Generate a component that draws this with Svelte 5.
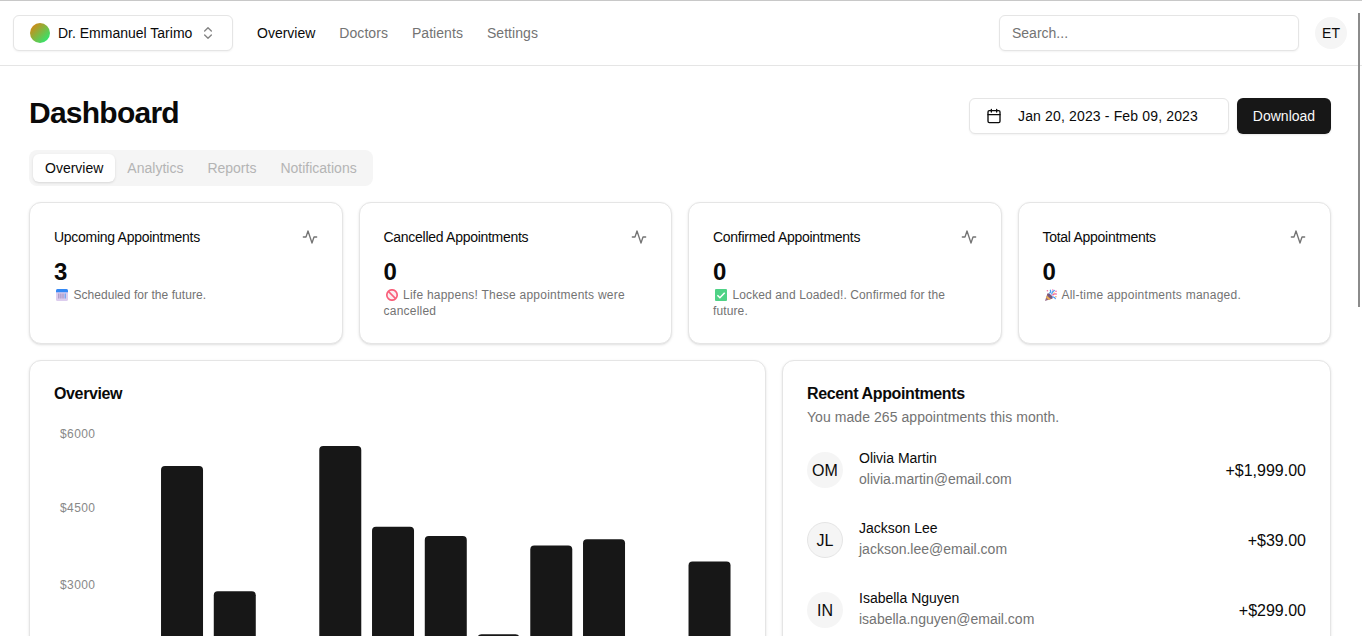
<script>
  const nav = ['Overview', 'Doctors', 'Patients', 'Settings'];
  const tabs = ['Overview', 'Analytics', 'Reports', 'Notifications'];
  const stats = [
    { title: 'Upcoming Appointments', value: 3, icon: 'calendar', note: 'Scheduled for the future.', tracking: 0.05 },
    { title: 'Cancelled Appointments', value: 0, icon: 'banned', note: 'Life happens! These appointments were cancelled', tracking: 0.23 },
    { title: 'Confirmed Appointments', value: 0, icon: 'check', note: 'Locked and Loaded!. Confirmed for the future.', tracking: 0.12 },
    { title: 'Total Appointments', value: 0, icon: 'party', note: 'All-time appointments managed.', tracking: 0.25 }
  ];
  const people = [
    { initials: 'OM', name: 'Olivia Martin', email: 'olivia.martin@email.com', amount: '+$1,999.00' },
    { initials: 'JL', name: 'Jackson Lee', email: 'jackson.lee@email.com', amount: '+$39.00', ring: true },
    { initials: 'IN', name: 'Isabella Nguyen', email: 'isabella.nguyen@email.com', amount: '+$299.00' }
  ];
  // Chart geometry: 12 bands of 52.75px starting at x=65, baseline at y=315
  const ticks = [
    { label: '$6000', y: 13 },
    { label: '$4500', y: 87 },
    { label: '$3000', y: 164 }
  ];
  const bars = [
    { month: 1, top: 41 },
    { month: 2, top: 166.3 },
    { month: 4, top: 21 },
    { month: 5, top: 101.7 },
    { month: 6, top: 111 },
    { month: 7, top: 209.2 },
    { month: 8, top: 120.4 },
    { month: 9, top: 114.2 },
    { month: 11, top: 136.5 }
  ];
  function barPath({ month, top }) {
    const x = 65 + month * 52.75 + 5.275;
    return `M${x} 315V${top + 4}a4 4 0 0 1 4-4h34a4 4 0 0 1 4 4V315Z`;
  }
</script>

<div class="page">
  <header>
    <button class="box switcher">
      <span class="dot"></span>
      <span class="who">Dr. Emmanuel Tarimo</span>
      <svg class="line-icon faded" viewBox="0 0 24 24"><path d="m7 15 5 5 5-5M7 9l5-5 5 5" /></svg>
    </button>
    <nav>
      {#each nav as item, i}
        <a class:current={i === 0}>{item}</a>
      {/each}
    </nav>
    <input class="box search" placeholder="Search..." />
    <span class="me">ET</span>
  </header>

  <main>
    <div class="heading">
      <h2>Dashboard</h2>
      <div class="actions">
        <button class="box dates">
          <svg class="line-icon" viewBox="0 0 24 24"><path d="M8 2v4M16 2v4M3 10h18" /><rect x="3" y="4" width="18" height="18" rx="2" /></svg>
          Jan 20, 2023 - Feb 09, 2023
        </button>
        <button class="download">Download</button>
      </div>
    </div>

    <div class="tabs">
      {#each tabs as tab, i}
        <button class="tab" class:active={i === 0}>{tab}</button>
      {/each}
    </div>

    <section class="stats">
      {#each stats as stat}
        <article class="card stat">
          <div class="stat-head">
            <h3>{stat.title}</h3>
            <svg class="line-icon muted" viewBox="0 0 24 24"><path d="M22 12h-4l-3 9L9 3l-3 9H2" /></svg>
          </div>
          <div class="value">{stat.value}</div>
          <p style="letter-spacing: {stat.tracking}px">
            <svg class="emoji" viewBox="0 0 16 12">
              {#if stat.icon === 'calendar'}
                <rect x="2" width="12" height="12" rx="1.6" fill="#dccdee" />
                <path d="M2 3.2V1.5Q2 0 3.5 0h9Q14 0 14 1.5v1.7Z" fill="#3489f5" />
                <path d="M4.8 4.4v5.2M6.9 4.4v5.2M9 4.4v5.2" stroke="#a18fc0" stroke-width="1.1" />
                <path d="M11.2 4.4v5.2" stroke="#5e9df0" stroke-width="1.1" />
              {:else if stat.icon === 'banned'}
                <circle cx="8" cy="6" r="5.2" fill="#fbeef1" stroke="#f9607b" stroke-width="1.7" />
                <path d="m4.4 2.4 7.2 7.2" stroke="#f9607b" stroke-width="1.6" />
              {:else if stat.icon === 'check'}
                <rect x="2" width="12" height="12" rx="1" fill="#4fd286" />
                <path d="m4.4 6.2 2.5 2.5 4.8-5" fill="none" stroke="#fff" stroke-width="1.5" />
              {:else}
                <path d="M2 12 4.4 4.5 9.4 9.4Z" fill="#9a6c86" />
                <path d="m3.7 6.8 4.1 3.4-1.7.7-3-2.5Z" fill="#eeb04f" />
                <ellipse cx="7" cy="7" rx="1.5" ry="3.4" transform="rotate(-45 7 7)" fill="#75577c" />
                <path d="M6.4 4.4Q8.5 3 7.2.8M8.6 5.5q.3-3 3.2-4.2" fill="none" stroke="#4c9cf0" stroke-width="1.2" />
                <path d="M9.5 6.4q1-2 4.3-1.2" fill="none" stroke="#f05b9a" stroke-width="1.3" />
                <path d="M9.2 8q2.5-.4 3.4 2.1" fill="none" stroke="#4b9af0" stroke-width="1.3" />
                <circle cx="4.4" cy="1.8" r=".8" fill="#f06f9e" />
                <circle cx="9.8" cy="1" r=".7" fill="#ec6bb2" />
                <circle cx="13" cy="2.3" r=".8" fill="#ef669b" />
                <circle cx="11" cy="4" r=".7" fill="#f3b44e" />
                <circle cx="12.9" cy="7.8" r=".7" fill="#ee9957" />
              {/if}
            </svg>
            {stat.note}
          </p>
        </article>
      {/each}
    </section>

    <section class="panels">
      <article class="card overview">
        <h3>Overview</h3>
        <svg class="chart" width="703" height="350" viewBox="0 0 703 350">
          {#each ticks as tick}
            <text x="57.4" y={tick.y} text-anchor="end">{tick.label}</text>
          {/each}
          {#each bars as bar}
            <path d={barPath(bar)} />
          {/each}
        </svg>
      </article>

      <article class="card recent">
        <h3>Recent Appointments</h3>
        <p class="sub">You made 265 appointments this month.</p>
        <div class="list">
          {#each people as person}
            <div class="person">
              <span class="avatar" class:ring={person.ring}>{person.initials}</span>
              <div class="info">
                <span class="name">{person.name}</span>
                <span class="email">{person.email}</span>
              </div>
              <span class="amount">{person.amount}</span>
            </div>
          {/each}
        </div>
      </article>
    </section>
  </main>
  <div class="scroll-thumb"></div>
</div>

<style>
  :global(body) {
    overflow: hidden;
    background: #fff;
  }
  .page, .page * {
    box-sizing: border-box;
  }
  .page {
    position: relative;
    height: 636px;
    overflow: hidden;
    border-top: 1px solid #c8c8c8;
    background: #fff;
    color: #0a0a0a;
    font: 14px/20px "Liberation Sans", Arial, sans-serif;
  }
  h2, h3, p {
    margin: 0;
  }
  button, input {
    font: inherit;
    color: inherit;
    border: 0;
    background: none;
    margin: 0;
  }
  header {
    display: flex;
    align-items: center;
    height: 65px;
    padding: 0 15px 0 13px;
    border-bottom: 1px solid #e5e5e5;
  }
  .box {
    height: 36px;
    border: 1px solid #e5e5e5;
    border-radius: 6px;
    background: #fff;
    box-shadow: 0 1px 2px rgb(0 0 0 / 0.05);
  }
  .line-icon {
    flex: none;
    width: 16px;
    height: 16px;
    fill: none;
    stroke: currentColor;
    stroke-width: 2;
    stroke-linecap: round;
    stroke-linejoin: round;
  }
  .faded {
    opacity: 0.5;
    margin-left: auto;
  }
  .muted {
    color: #737373;
  }
  .switcher {
    display: flex;
    align-items: center;
    width: 220px;
    padding: 0 16px;
  }
  .dot {
    width: 20px;
    height: 20px;
    margin-right: 8px;
    border-radius: 50%;
    background: linear-gradient(135deg, #ea7b08 0%, #16f57c 100%);
  }
  nav {
    display: flex;
    gap: 24px;
    margin: 0 auto 0 24px;
    color: #737373;
    letter-spacing: 0.05px;
  }
  .current {
    color: #0a0a0a;
    letter-spacing: 0;
  }
  .search {
    width: 300px;
    padding: 4px 12px;
    margin-right: 16px;
  }
  .search::placeholder {
    color: #737373;
    opacity: 1;
  }
  .me {
    display: grid;
    place-items: center;
    width: 32px;
    height: 32px;
    border-radius: 50%;
    background: #f5f5f5;
  }
  main {
    padding: 32px 31px 0 29px;
  }
  .heading {
    display: flex;
    justify-content: space-between;
    height: 36px;
    margin-bottom: 16px;
  }
  h2 {
    font-size: 30px;
    line-height: 30px;
    font-weight: 700;
    letter-spacing: -0.025em;
  }
  .actions {
    display: flex;
    gap: 8px;
  }
  .dates {
    display: flex;
    align-items: center;
    gap: 16px;
    width: 260px;
    padding: 0 16px;
    letter-spacing: 0.15px;
    white-space: nowrap;
  }
  .download {
    width: 94px;
    height: 36px;
    padding: 0;
    border-radius: 6px;
    background: #171717;
    color: #fafafa;
    box-shadow: 0 1px 2px rgb(0 0 0 / 0.1);
  }
  .tabs {
    display: inline-flex;
    height: 36px;
    padding: 4px;
    border-radius: 8px;
    background: #f5f5f5;
    vertical-align: top;
  }
  .tab {
    padding: 4px 12px;
    border-radius: 6px;
    color: #b4b4b4;
  }
  .active {
    background: #fff;
    color: #0a0a0a;
    box-shadow: 0 1px 3px rgb(0 0 0 / 0.1), 0 1px 2px -1px rgb(0 0 0 / 0.1);
  }
  .card {
    border: 1px solid #e5e5e5;
    border-radius: 12px;
    background: #fff;
    box-shadow: 0 1px 3px rgb(0 0 0 / 0.1), 0 1px 2px -1px rgb(0 0 0 / 0.1);
  }
  .stats {
    display: grid;
    grid-template-columns: repeat(4, 1fr);
    gap: 16px;
    margin: 16px 0;
  }
  .stat {
    height: 142px;
    padding: 24px;
  }
  .stat-head {
    display: flex;
    align-items: center;
    justify-content: space-between;
    margin-bottom: 8px;
  }
  .stat h3 {
    font-size: 14px;
    font-weight: 400;
    letter-spacing: -0.28px;
  }
  .value {
    height: 32px;
    font-size: 24px;
    line-height: 34px;
    font-weight: 700;
  }
  .stat p {
    font-size: 12px;
    line-height: 16px;
    color: #737373;
  }
  .emoji {
    width: 16px;
    height: 12px;
    vertical-align: -2px;
  }
  .panels {
    display: grid;
    grid-template-columns: 737px 1fr;
    gap: 16px;
  }
  .panels .card {
    height: 427px;
    padding: 24px;
  }
  .panels h3 {
    height: 16px;
    font-size: 16px;
    line-height: 18px;
    font-weight: 700;
    letter-spacing: -0.37px;
  }
  .chart {
    display: block;
    margin: 24px 0 0 -16px;
    fill: #171717;
  }
  .chart text {
    font-size: 12px;
    letter-spacing: 0.4px;
    fill: #888;
  }
  .sub {
    margin-top: 6px;
    color: #737373;
    letter-spacing: 0.06px;
  }
  .list {
    display: grid;
    gap: 32px;
    margin-top: 24px;
  }
  .person {
    display: flex;
    align-items: center;
    height: 38px;
  }
  .avatar {
    display: grid;
    place-items: center;
    width: 36px;
    height: 36px;
    margin-right: 16px;
    padding-top: 2px;
    border-radius: 50%;
    background: #f5f5f5;
    font-size: 16px;
    line-height: 24px;
  }
  .ring {
    border: 1px solid #e5e5e5;
  }
  .info {
    display: grid;
    gap: 4px;
  }
  .name {
    line-height: 14px;
  }
  .email {
    color: #737373;
  }
  .amount {
    margin-left: auto;
    padding-top: 2px;
    font-size: 16px;
    line-height: 24px;
  }
  .scroll-thumb {
    position: absolute;
    top: 12px;
    right: 2px;
    width: 2px;
    height: 294px;
    background: #8b8b8b;
  }
</style>
